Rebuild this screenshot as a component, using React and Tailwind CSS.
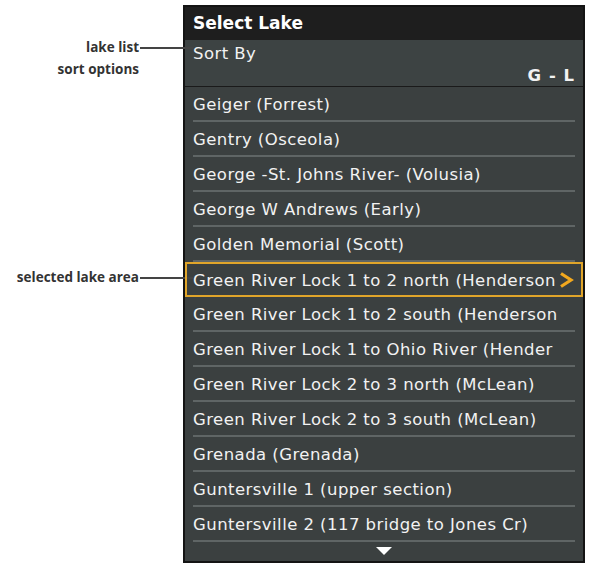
const lakes = [
  'Geiger (Forrest)',
  'Gentry (Osceola)',
  'George -St. Johns River- (Volusia)',
  'George W Andrews (Early)',
  'Golden Memorial (Scott)',
  'Green River Lock 1 to 2 north (Henderson',
  'Green River Lock 1 to 2 south (Henderson',
  'Green River Lock 1 to Ohio River (Hender',
  'Green River Lock 2 to 3 north (McLean)',
  'Green River Lock 2 to 3 south (McLean)',
  'Grenada (Grenada)',
  'Guntersville 1 (upper section)',
  'Guntersville 2 (117 bridge to Jones Cr)',
]

const SELECTED = 5

function Callout({ lines, top }) {
  return (
    <div className="absolute left-0 right-[-10px] flex items-start" style={{ top }}>
      <div className="flex-1 text-right text-[13.5px] font-bold leading-[22px] text-[#333]">
        {lines.map((l) => (
          <div key={l}>{l}</div>
        ))}
      </div>
      <div className="mt-[11px] ml-[1px] h-[1.5px] w-[53px] bg-[#444]" />
    </div>
  )
}

function Row({ name, selected }) {
  if (selected) {
    return (
      <div className="relative flex h-[35px] items-center border-2 border-[#e0a52a] pt-[3px] pl-[6px] pr-[7px]">
        <span className="flex-1 whitespace-nowrap overflow-hidden">{name}</span>
        <svg width="16" height="18" viewBox="0 0 16 18" className="shrink-0 -mt-[3px]">
          <path d="M3 2.5 L13 9 L3 15.5" fill="none" stroke="#f2a81e" strokeWidth="3.2" strokeLinejoin="miter" />
        </svg>
      </div>
    )
  }
  return (
    <div className="flex h-[35px] flex-col">
      <div className="flex flex-1 items-center px-2 pt-[3px]">
        <span className="whitespace-nowrap overflow-hidden">{name}</span>
      </div>
      <div className="mx-2 h-[2px] bg-[#5f6565]" />
    </div>
  )
}

export default function App() {
  return (
    <div className="relative h-[575px] w-[593px] bg-white font-['DejaVu_Sans',sans-serif]">
      <div className="absolute left-0 top-0 w-[183px] font-['Open_Sans',sans-serif]">
        <Callout lines={['lake list', 'sort options']} top={36} />
        <Callout lines={['selected lake area']} top={266} />
      </div>
      <div className="flex pt-[5px] pl-[183px]">
        <div className="w-[402px] border-2 border-[#141414] bg-[#3b4040] text-[16.5px] tracking-[0.45px] text-[#f2f2f2]">
          <div className="flex h-[33px] items-center bg-[#1e1e1e] px-2 pt-[1px] text-[17px] font-bold tracking-normal text-white">
            Select Lake
          </div>
          <div className="flex h-[47px] flex-col border-b border-[#1a1a1a] bg-[#3d4343] px-2">
            <div className="pt-[4px] leading-[20px]">Sort By</div>
            <div className="mt-[2px] text-right font-bold leading-[20px] tracking-[1px]">G - L</div>
          </div>
          {lakes.map((n, i) => (
            <Row key={n} name={n} selected={i === SELECTED} />
          ))}
          <div className="flex h-[19px] items-start justify-center pt-[5px]">
            <svg width="16" height="8" viewBox="0 0 16 8">
              <path d="M0 0 H16 L8 8 Z" fill="#ffffff" />
            </svg>
          </div>
        </div>
      </div>
    </div>
  )
}
